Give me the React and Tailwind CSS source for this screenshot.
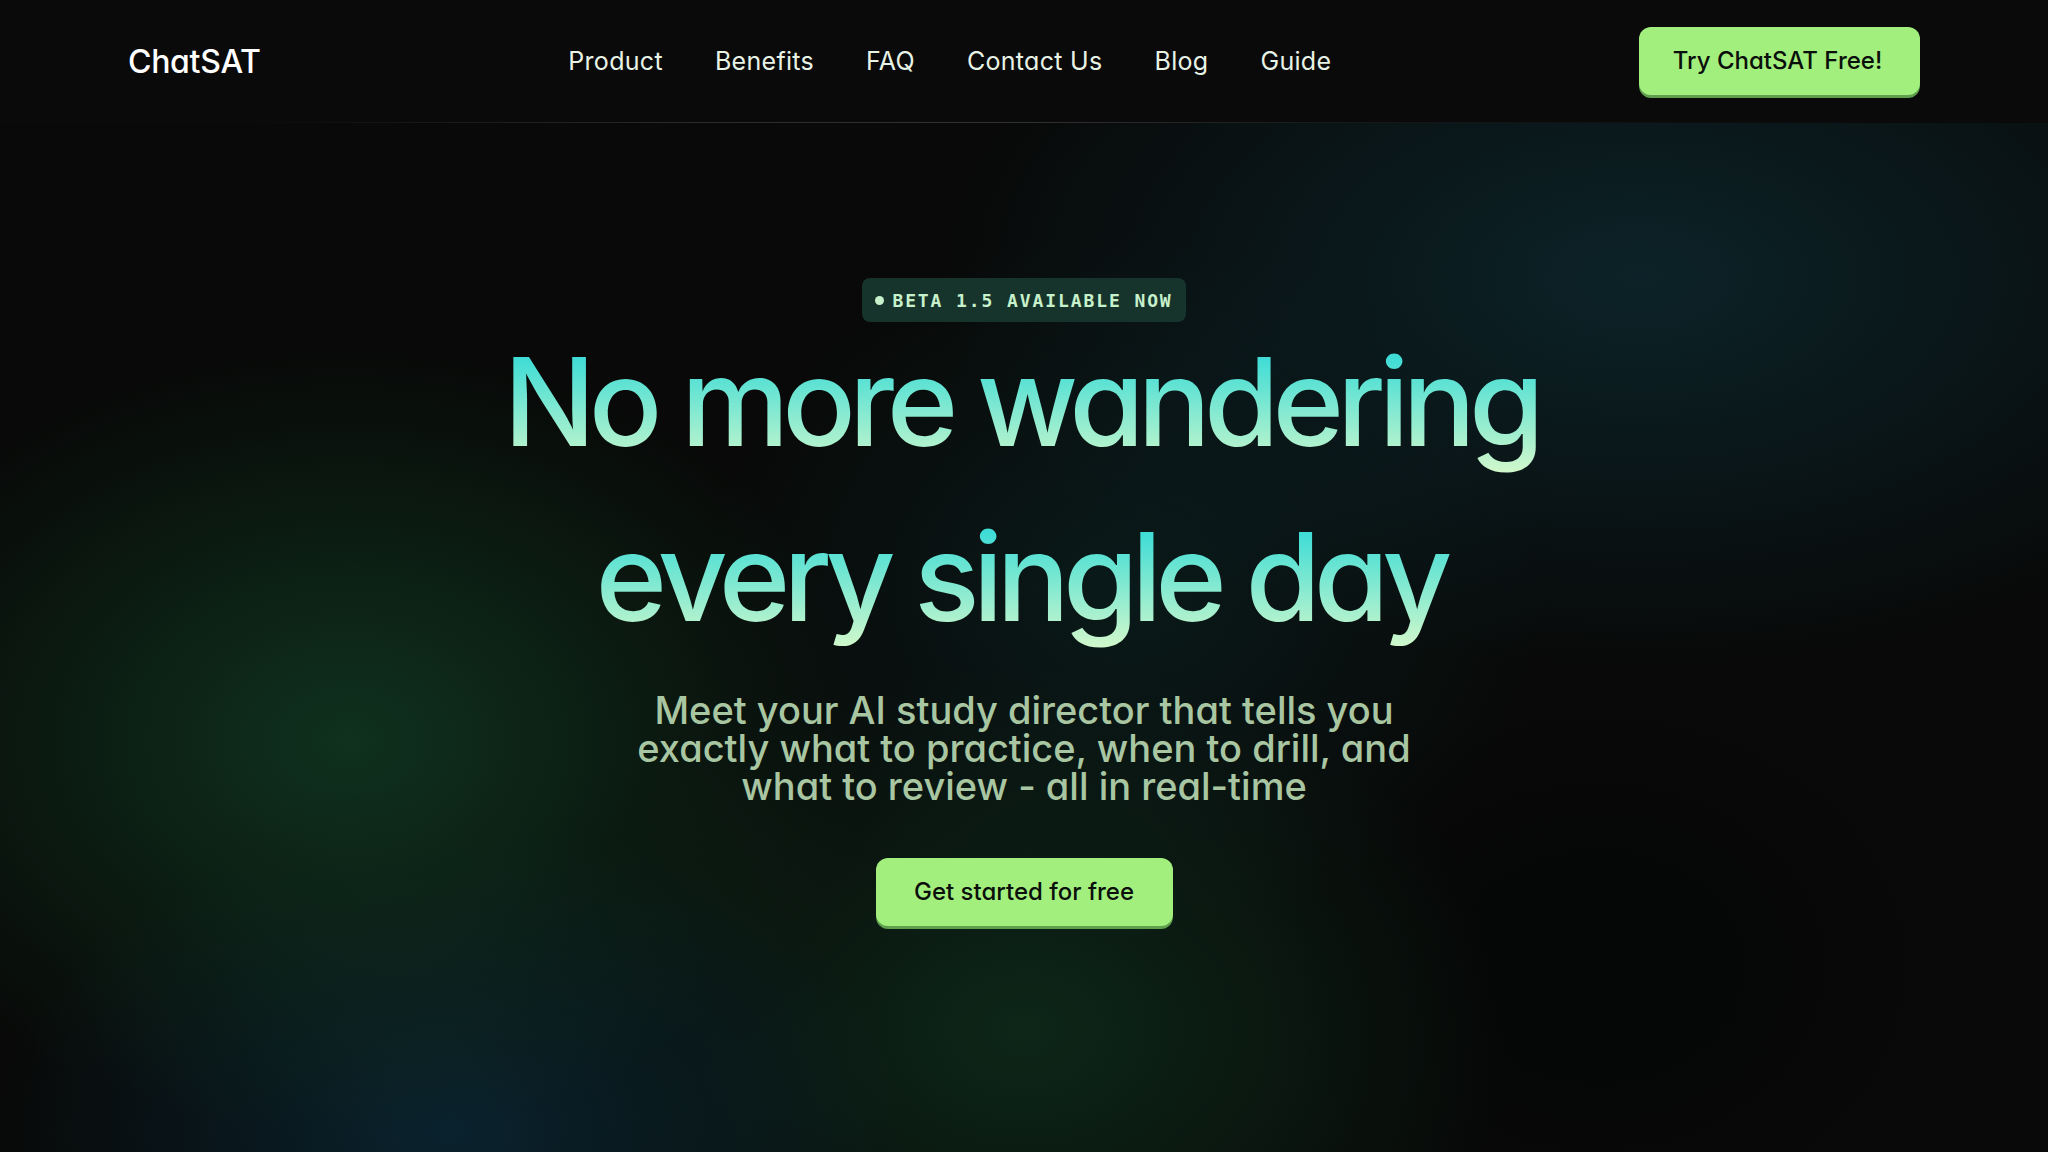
export default function App() {
  const font = "font-['Inter','Noto_Sans',sans-serif] [font-feature-settings:'cv11','ss01']";
  return (
    <div className={`w-full h-[1152px] flex flex-col bg-[#0a0a0a] overflow-hidden ${font}`}>
      {/* NAV */}
      <header className="h-[123px] shrink-0 relative flex items-center justify-between px-[128px] bg-[#0a0a0a]">
        <div className="text-[32px] font-medium text-white tracking-[-0.3px]">ChatSAT</div>
        <nav className="flex items-center gap-[52px] text-[25px] tracking-[0.3px] text-[#e8f3e6]">
          <a>Product</a>
          <a>Benefits</a>
          <a>FAQ</a>
          <a>Contact Us</a>
          <a>Blog</a>
          <a>Guide</a>
        </nav>
        <button className="w-[281px] h-[68px] rounded-[12px] bg-[#a2ef7e] shadow-[0_3px_0_#5f9e4d] text-[24px] font-medium text-[#0b0f0b] mb-[2px] pr-[4px]">
          Try ChatSAT Free!
        </button>
        <div className="absolute left-0 right-0 bottom-0 h-px bg-[linear-gradient(90deg,transparent_12%,rgba(255,255,255,0.14)_35%,rgba(255,255,255,0.16)_50%,rgba(255,255,255,0.06)_65%,transparent_92%)]" />
      </header>

      {/* HERO */}
      <main className="flex-1 flex flex-col items-center pt-[155px] bg-[#080908] bg-[radial-gradient(ellipse_750px_560px_at_17%_60%,rgba(16,54,32,0.9),transparent_70%),radial-gradient(ellipse_650px_450px_at_22%_98%,rgba(10,36,48,0.95),transparent_70%),radial-gradient(ellipse_700px_520px_at_50%_88%,rgba(14,44,28,0.85),transparent_70%),radial-gradient(ellipse_1000px_560px_at_80%_15%,rgba(12,36,42,0.95),transparent_70%),radial-gradient(ellipse_600px_500px_at_55%_45%,rgba(10,30,30,0.8),transparent_70%),radial-gradient(ellipse_500px_400px_at_78%_82%,rgba(4,5,5,0.95),transparent_70%)]">
        <div className="h-[44px] px-[13px] rounded-[8px] bg-[#17342c] flex items-center gap-[8px] font-['DejaVu_Sans_Mono','Liberation_Mono',monospace] font-bold text-[18px] tracking-[1.9px] text-[#c6f1cb]">
          <span className="w-[9px] h-[9px] rounded-full bg-[#c6f1cb]" />
          <span>BETA 1.5 AVAILABLE NOW</span>
        </div>

        <h1 className="mt-[19px] flex flex-col items-center gap-[53px] text-[122px] leading-none font-medium tracking-[-7px]">
          <span className="block pb-[10px] pr-[7px] bg-[linear-gradient(180deg,#3edcd6_12%,#d2f8cb_100%)] bg-clip-text text-transparent">
            No more wandering
          </span>
          <span className="block pb-[10px] pr-[7px] -mt-[10px] bg-[linear-gradient(180deg,#3edcd6_12%,#d2f8cb_100%)] bg-clip-text text-transparent">
            every single day
          </span>
        </h1>

        <p className="mt-[43px] w-[820px] text-center text-[38px] leading-[38px] font-medium text-[#a9c6a2]">
          Meet your AI study director that tells you exactly what to practice, when to drill, and what to review - all in real-time
        </p>

        <button className="mt-[53px] w-[297px] h-[68px] rounded-[12px] bg-[#a2ef7e] shadow-[0_3px_0_#5f9e4d] text-[24px] font-medium text-[#0b0f0b]">
          Get started for free
        </button>
      </main>
    </div>
  );
}
